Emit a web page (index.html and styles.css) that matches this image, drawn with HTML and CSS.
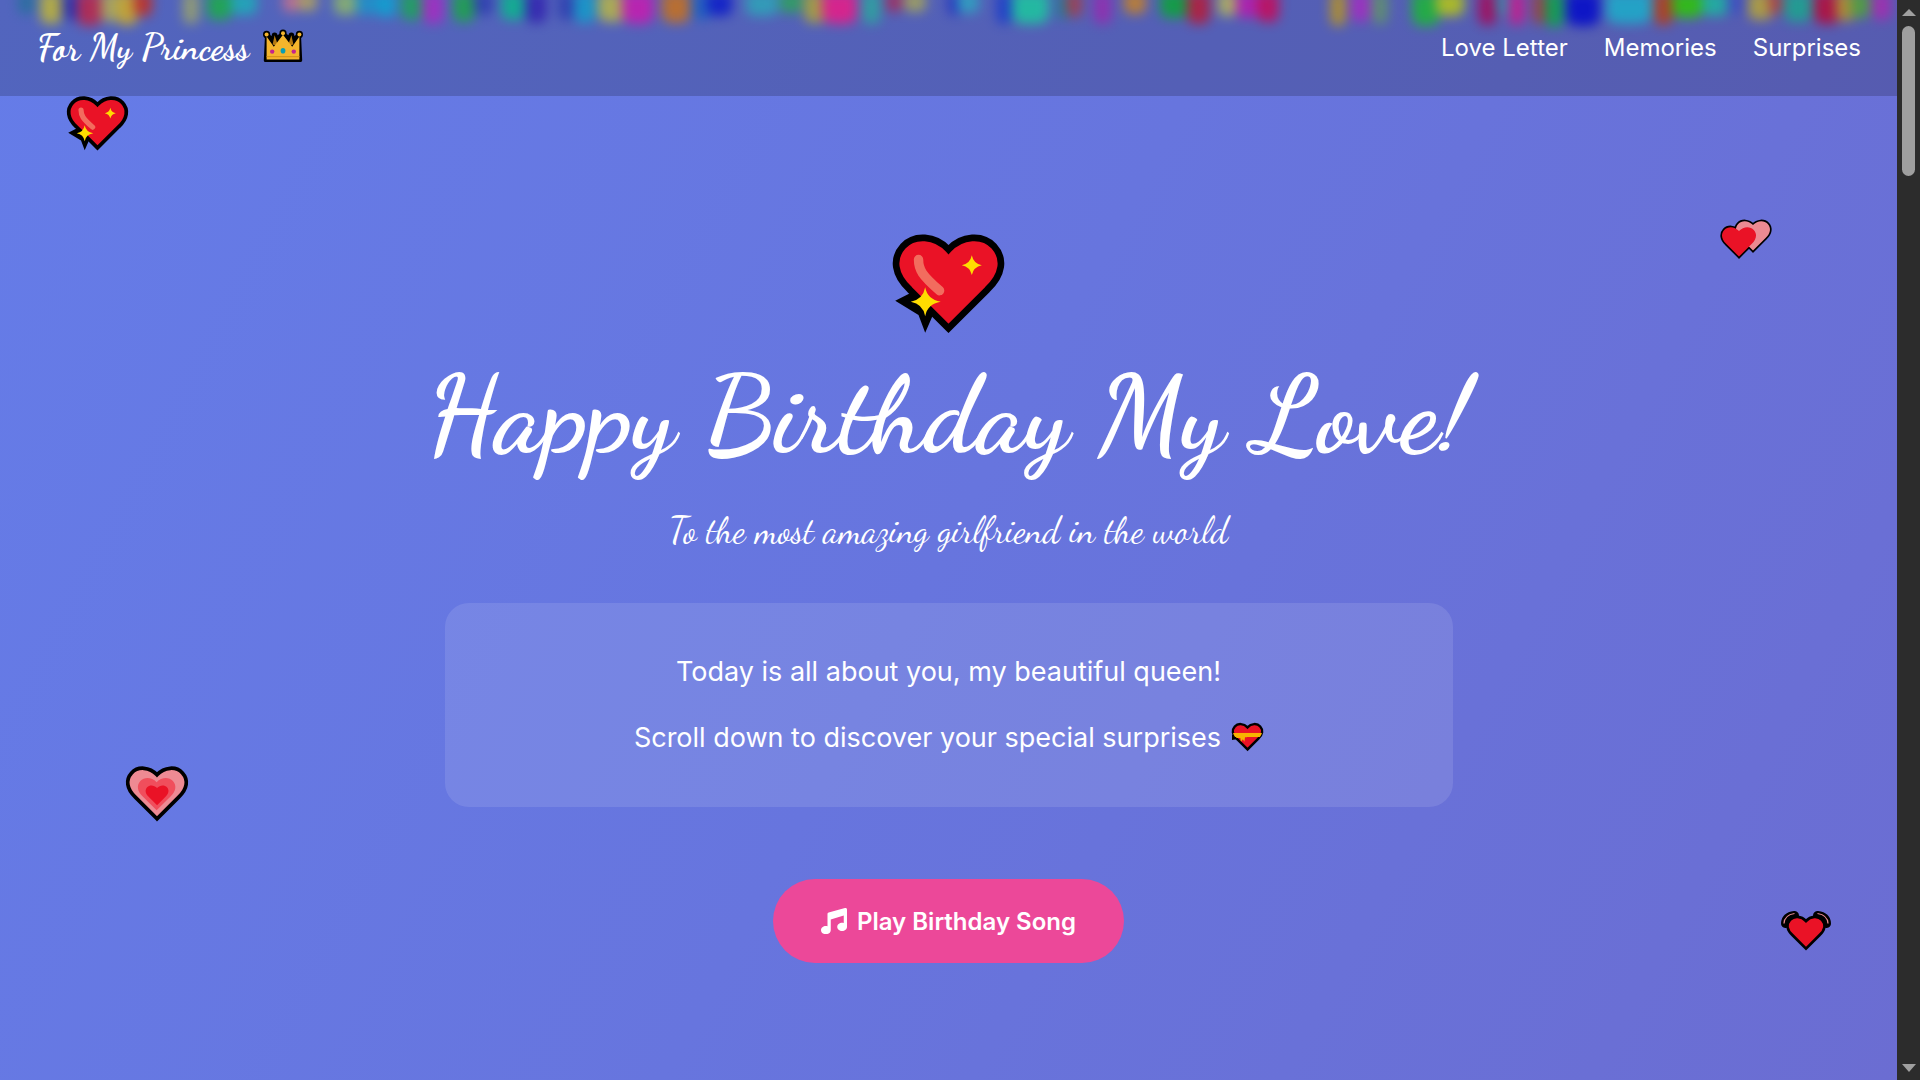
FILE: index.html
```html
<!DOCTYPE html>
<html lang="en">
<head>
    <meta charset="UTF-8">
    <meta name="viewport" content="width=device-width, initial-scale=1.0">
    <title>Happy Birthday My Love</title>
    <link rel="stylesheet" href="styles.css">
</head>
<body>
    <svg class="icon-defs" width="0" height="0" aria-hidden="true">
        <defs>
            <path id="heart-shape" d="M50 85 L15 50 C1 37 -1 22 9 11 C19 0 38 1 50 14 C62 1 81 0 91 11 C101 22 99 37 85 50 Z"/>
            <clipPath id="heart-clip"><use href="#heart-shape"/></clipPath>

            <g id="sparkling-heart">
                <use href="#heart-shape" fill="#ea1226" stroke="#000" stroke-width="6"/>
                <path d="M23 23 C23 32 26 37 42 51" fill="none" stroke="#f26c5e" stroke-width="8.5" stroke-linecap="round"/>
                <path d="M2 60 L18 52 L29 61 L36 73 L29 89 L23 73 Z" fill="#000"/>
                <path d="M29 48 Q31 59 43 61 Q31 63 29 74 Q27 63 16 61 Q27 59 29 48 Z" fill="#ffdc00"/>
                <path d="M71 19 Q72.5 26.5 80 28 Q72.5 29.5 71 37 Q69.5 29.5 62 28 Q69.5 26.5 71 19 Z" fill="#ffdc00"/>
            </g>

            <g id="crown">
                <path d="M9 14 L27 24 L50 12 L73 24 L91 14 L94 78 L6 78 Z" fill="#000" stroke="#000" stroke-width="8" stroke-linejoin="round"/>
                <circle cx="9" cy="13" r="9" fill="#000"/>
                <circle cx="50" cy="10" r="9" fill="#000"/>
                <circle cx="91" cy="13" r="9" fill="#000"/>
                <circle cx="29" cy="15" r="7" fill="#000"/>
                <circle cx="71" cy="15" r="7" fill="#000"/>
                <path d="M29 15 L24 38 L38 42 Z M71 15 L76 38 L62 42 Z" fill="#b47a12"/>
                <path d="M9 18 L27 44 L50 14 L73 44 L91 18 L91 76 L9 76 Z" fill="#f5b52c"/>
                <circle cx="9" cy="13" r="5" fill="#f5b52c"/>
                <circle cx="50" cy="10" r="5" fill="#f5b52c"/>
                <circle cx="91" cy="13" r="5" fill="#f5b52c"/>
                <circle cx="23" cy="56" r="5.5" fill="#c5248e"/>
                <ellipse cx="50" cy="54" rx="6" ry="7" fill="#0a9eb5"/>
                <circle cx="77" cy="56" r="5.5" fill="#c5248e"/>
                <rect x="9" y="67" width="82" height="3" fill="#d8951a"/>
            </g>

            <g id="two-hearts">
                <use href="#heart-shape" transform="translate(28 0) scale(.72)" stroke="#000" stroke-width="9"/>
                <use href="#heart-shape" transform="translate(0 12) scale(.72)" stroke="#000" stroke-width="9"/>
                <use href="#heart-shape" transform="translate(28 0) scale(.72)" fill="#ec8a92"/>
                <use href="#heart-shape" transform="translate(0 12) scale(.72)" fill="#ea1226"/>
            </g>

            <g id="growing-heart">
                <use href="#heart-shape" fill="#ee8a93" stroke="#000" stroke-width="6"/>
                <use href="#heart-shape" transform="translate(17.4 17) scale(.64)" fill="#f04e5c"/>
                <use href="#heart-shape" transform="translate(30.6 30) scale(.39)" fill="#ea1226"/>
            </g>

            <g id="beating-heart">
                <path d="M9 27 Q10 13 27 11 M91 27 Q90 13 73 11" fill="none" stroke="#000" stroke-width="18" stroke-linecap="round"/>
                <path d="M6 27 Q7 10 27 7 M15 25 Q16 16 29 15 M94 27 Q93 10 73 7 M85 25 Q84 16 71 15" fill="none" stroke="#e88a90" stroke-width="2.5"/>
                <use href="#heart-shape" transform="translate(11 11) scale(.78)" fill="#ea1226" stroke="#000" stroke-width="7"/>
            </g>

            <g id="ribbon-heart">
                <path d="M0 35 L0 55 L14 52 Z" fill="#000"/>
                <use href="#heart-shape" fill="#ea1226" stroke="#000" stroke-width="8"/>
                <g clip-path="url(#heart-clip)"><rect x="0" y="32" width="100" height="13" fill="#f8b400"/></g>
                <path d="M12 32 H48 V46 H42 L40 60 L35 52 L29 60 L27 48 H14 Z" fill="#f8b400"/>
            </g>
        </defs>
    </svg>

    <div class="page">
        <main class="main">
            <nav class="navbar">
                <div class="logo">
                    <span>For My Princess</span>
                    <svg class="emoji emoji-crown" viewBox="0 0 100 84"><use href="#crown"/></svg>
                </div>
                <div class="nav-links">
                    <a href="#letter">Love Letter</a>
                    <a href="#memories">Memories</a>
                    <a href="#surprises">Surprises</a>
                </div>
            </nav>
            <div class="confetti" id="confetti"></div>

            <section class="hero">
                <svg class="emoji hero-heart" viewBox="0 0 100 90"><use href="#sparkling-heart"/></svg>
                <h1>Happy Birthday My Love!</h1>
                <p class="subtitle">To the most amazing girlfriend in the world</p>
                <div class="message-card">
                    <p>Today is all about you, my beautiful queen!</p>
                    <p>Scroll down to discover your special surprises
                        <svg class="emoji emoji-inline" viewBox="0 0 100 90"><use href="#ribbon-heart"/></svg>
                    </p>
                </div>
                <button class="play-btn">
                    <svg class="music-icon" viewBox="0 0 512 512"><path fill="currentColor" d="M499 3c8 6 13 15 13 25v344c0 44-43 80-96 80s-96-36-96-80 43-80 96-80c11 0 22 2 32 5V147l-256 77v212c0 44-43 80-96 80S0 480 0 436s43-80 96-80c11 0 22 2 32 5V120c0-14 9-27 23-31L471 1c10-3 20-1 28 2z"/></svg>
                    Play Birthday Song
                </button>
            </section>

            <svg class="emoji float float-1" viewBox="0 0 100 90"><use href="#sparkling-heart"/></svg>
            <svg class="emoji float float-2" viewBox="0 0 100 80"><use href="#two-hearts"/></svg>
            <svg class="emoji float float-3" viewBox="0 0 100 90"><use href="#growing-heart"/></svg>
            <svg class="emoji float float-4" viewBox="0 0 100 84"><use href="#beating-heart"/></svg>
        </main>

        <div class="scrollbar">
            <span class="arrow arrow-up"></span>
            <div class="track"><div class="thumb"></div></div>
            <span class="arrow arrow-down"></span>
        </div>
    </div>

    <script>
        const pieces = [
            [20,13,'#2a6f9e',12],[42,18,'#b8b040',22],[64,15,'#2a30b0',18],[79,21,'#b52a50',24],
            [103,12,'#a8a860',20],[118,18,'#c8a830',23],[136,14,'#c03028',14],[185,12,'#95a070',22],
            [209,21,'#1fa850',18],[233,22,'#20a8b8',13],[285,12,'#c07090',10],[300,15,'#b0a060',9],
            [336,19,'#88b070',13],[358,18,'#2090c8',13],[379,15,'#10a0d0',15],[403,18,'#20a060',18],
            [424,18,'#a030c0',22],[455,18,'#20a050',20],[476,15,'#3040b0',13],[503,21,'#10b090',18],
            [527,18,'#3528b0',21],[560,13,'#3040b0',18],[576,18,'#1898c8',21],[600,24,'#b0b050',20],
            [624,28,'#c020b0',22],[664,24,'#c07028',21],[694,15,'#2060c0',18],[709,21,'#1020c8',14],
            [748,28,'#30a0b8',14],[782,18,'#30a060',11],[806,18,'#a8a040',21],[824,31,'#e0208a',22],
            [864,15,'#30a0a0',22],[888,12,'#a03060',10],[906,18,'#a0a060',10],[950,9,'#2030c0',13],
            [959,18,'#30a0c0',11],[998,12,'#2040c8',22],[1014,33,'#20c0a0',22],[1059,9,'#208090',17],
            [1068,12,'#a04050',15],[1095,15,'#9030b0',22],[1126,18,'#c08030',12],[1162,24,'#10a040',16],
            [1189,19,'#b02040',22],[1220,15,'#b0b060',14],[1238,18,'#b020b0',16],[1259,18,'#c01060',20],
            [1332,12,'#b09030',24],[1353,15,'#a030c0',20],[1374,12,'#609070',22],[1414,24,'#20b040',24],
            [1438,24,'#b0c020',14],[1480,15,'#a01060',23],[1498,10,'#3090b0',14],[1510,13,'#c02090',23],
            [1535,9,'#a04040',22],[1547,15,'#10a050',25],[1568,30,'#0810c8',24],[1608,42,'#20a8c8',22],
            [1656,15,'#b04020',23],[1674,27,'#30c010',16],[1704,22,'#20b0a0',14],[1729,15,'#4050c0',12],
            [1750,21,'#b0a040',18],[1771,9,'#b04040',12],[1786,24,'#20a090',20],[1816,22,'#b01040',22],
            [1838,15,'#b09030',19],[1853,15,'#50a040',16],[1874,15,'#a030b0',18]
        ];
        const box = document.getElementById('confetti');
        pieces.forEach(function (p) {
            const el = document.createElement('i');
            el.className = 'piece';
            el.style.left = (p[0] - 2) + 'px';
            el.style.width = (p[1] + 4) + 'px';
            el.style.background = p[2];
            el.style.height = (p[3] + 10) + 'px';
            box.appendChild(el);
        });
    </script>
</body>
</html>
```

FILE: styles.css
```css
* {
    box-sizing: border-box;
    margin: 0;
    padding: 0;
}
body {
    width: 1920px;
    height: 1080px;
    overflow: hidden;
    font-family: Inter, 'Noto Sans', sans-serif;
    color: #fff;
}
.icon-defs {
    position: absolute;
}
.page {
    display: flex;
    height: 100%;
}
.main {
    position: relative;
    flex: 1;
    overflow: hidden;
    display: flex;
    flex-direction: column;
    background: linear-gradient(118deg, #657ce8 0%, #6775de 50%, #6b6dd2 100%);
}
.navbar {
    height: 96px;
    flex-shrink: 0;
    display: flex;
    align-items: center;
    justify-content: space-between;
    padding: 0 36px 2px 37px;
    background-color: rgba(0,0,0,0.18);
}
.confetti {
    position: absolute;
    top: -8px;
    left: 0;
    right: 0;
    height: 44px;
    filter: blur(6px);
    opacity: 0.92;
    pointer-events: none;
}
.piece {
    position: absolute;
    top: 0;
    border-radius: 0 0 30% 30%;
}
.logo {
    display: flex;
    align-items: center;
    gap: 14px;
    font-family: 'Dancing Script', cursive;
    font-weight: 700;
    font-size: 36px;
}
.emoji {
    display: block;
    overflow: visible;
}
.emoji-crown {
    width: 40px;
    height: 34px;
    margin-bottom: 3px;
}
.nav-links {
    display: flex;
    gap: 36px;
}
.nav-links a {
    color: #fff;
    text-decoration: none;
    font-size: 24px;
}
.hero {
    flex: 1;
    display: flex;
    flex-direction: column;
    align-items: center;
    padding-top: 138px;
}
.hero-heart {
    width: 111px;
    height: 100px;
}
h1 {
    font-family: 'Dancing Script', cursive;
    font-weight: 700;
    font-size: 108px;
    line-height: 120px;
    margin-top: 22px;
}
.subtitle {
    font-family: 'Dancing Script', cursive;
    font-size: 36px;
    line-height: 44px;
    margin-top: 33px;
}
.message-card {
    width: 1008px;
    height: 204px;
    margin-top: 50px;
    padding-bottom: 2px;
    border-radius: 24px;
    background-color: rgba(255,255,255,0.11);
    display: flex;
    flex-direction: column;
    align-items: center;
    justify-content: center;
    gap: 33px;
    font-size: 27px;
}
.message-card p {
    display: flex;
    align-items: center;
    gap: 11px;
}
.emoji-inline {
    width: 31px;
    height: 28px;
}
.play-btn {
    display: flex;
    align-items: center;
    gap: 10px;
    margin-top: 72px;
    height: 84px;
    padding: 0 48px;
    border: none;
    border-radius: 42px;
    background-color: #ec4899;
    color: #fff;
    font-family: inherit;
    font-size: 24px;
    font-weight: 600;
}
.music-icon {
    width: 26px;
    height: 26px;
}
.float {
    position: absolute;
}
.float-1 {
    left: 67px;
    top: 96px;
    width: 61px;
    height: 55px;
}
.float-2 {
    left: 1721px;
    top: 220px;
    width: 50px;
    height: 40px;
}
.float-3 {
    left: 126px;
    top: 766px;
    width: 62px;
    height: 56px;
}
.float-4 {
    left: 1781px;
    top: 910px;
    width: 50px;
    height: 42px;
}
.scrollbar {
    width: 23px;
    display: flex;
    flex-direction: column;
    align-items: center;
    background-color: #2c2c2c;
}
.track {
    flex: 1;
    width: 100%;
    padding: 0 5px;
}
.thumb {
    margin-top: 5px;
    height: 150px;
    border-radius: 7px;
    background-color: #9f9f9f;
}
.arrow {
    width: 0;
    height: 0;
    margin: 9px 0 8px;
    border-left: 7px solid transparent;
    border-right: 7px solid transparent;
}
.arrow-up {
    border-bottom: 7px solid #a0a0a0;
    margin-bottom: 5px;
}
.arrow-down {
    margin: 5px 0 8px;
    border-top: 8px solid #a0a0a0;
}
```
